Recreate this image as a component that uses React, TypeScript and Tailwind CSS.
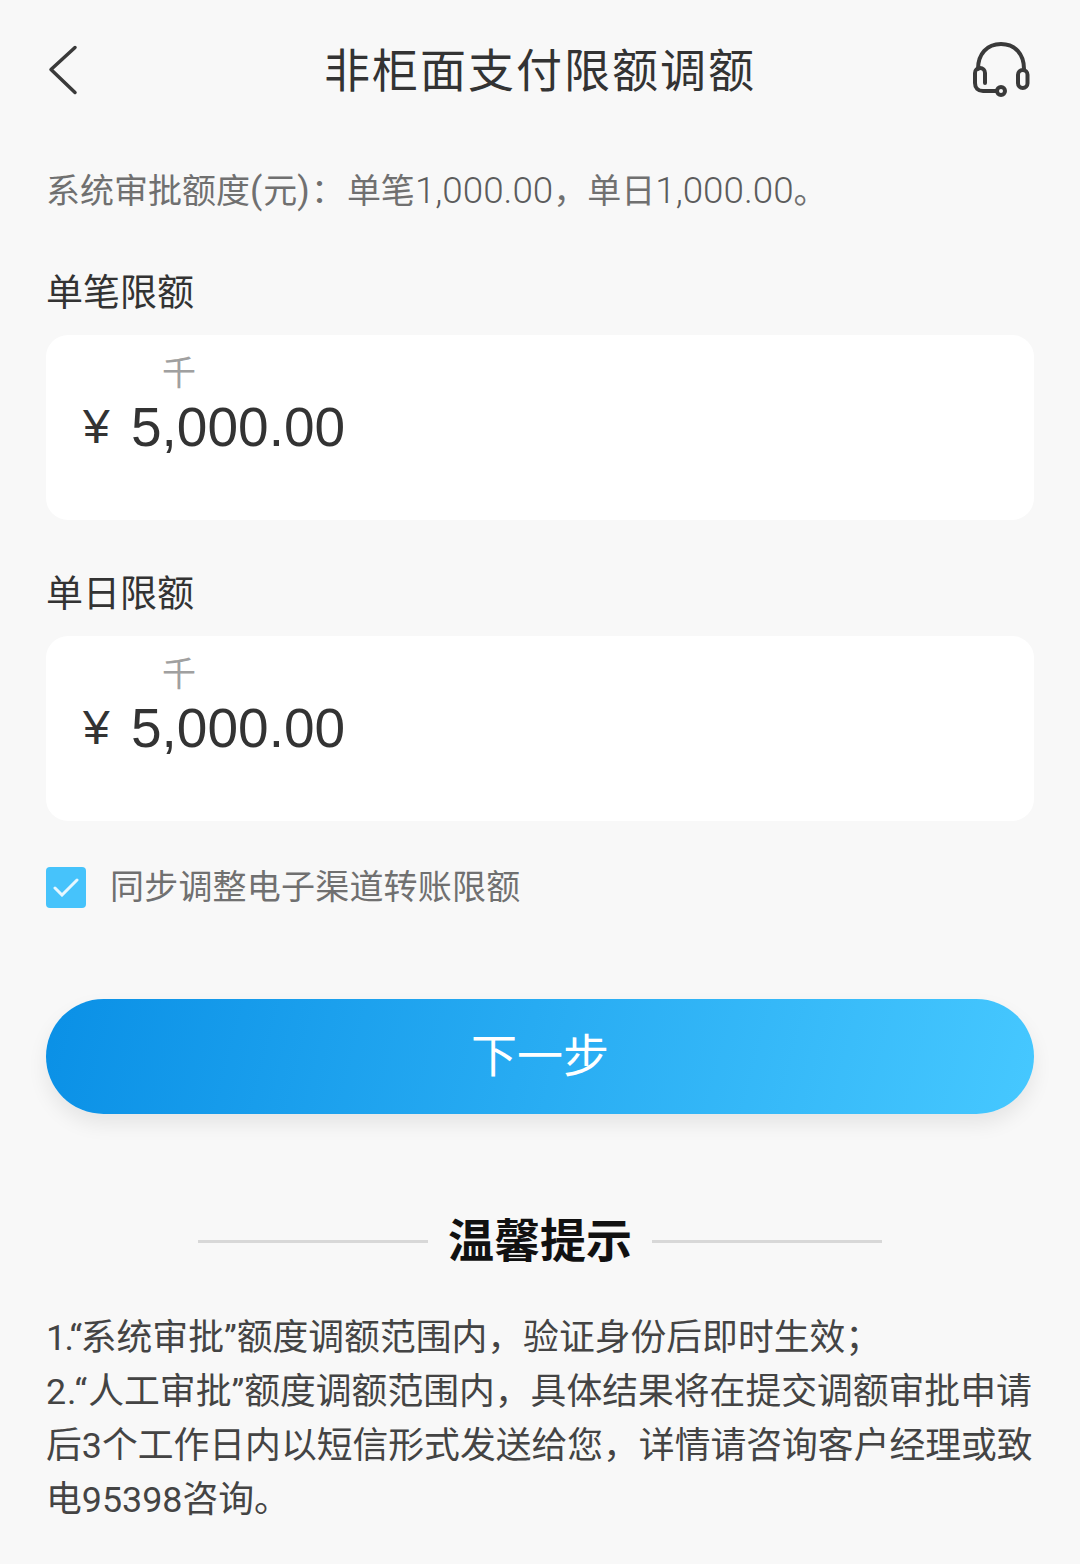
const FONT = "font-['Roboto','Noto_Sans_CJK_SC',sans-serif]";

function BackIcon() {
  return (
    <svg width="30" height="50" viewBox="0 0 30 50" fill="none" stroke="#3a3a3a" strokeWidth="3.500" strokeLinecap="round" strokeLinejoin="round" aria-hidden="true">
      <path d="M27 2.500 3 24.500l24 23" />
    </svg>
  );
}

function HeadsetIcon() {
  return (
    <svg width="62" height="60" viewBox="0 0 62 60" fill="none" stroke="#3a3a3a" strokeWidth="4" strokeLinecap="round" strokeLinejoin="round" aria-hidden="true">
      <path d="M8 29C8 14 17 4 31 4s23 10 23 25" />
      <path d="M15 43V33a5 5 0 0 0-10 0v10c0 5 3 8 8 8h14" />
      <rect x="48" y="30" width="9.500" height="18" rx="4.750" />
      <circle cx="31" cy="51" r="4" />
    </svg>
  );
}

function AmountCard({ label }: { label: string }) {
  return (
    <section>
      <h2 className="text-[37px] leading-[44px] text-[#333333] font-normal">{label}</h2>
      <div className="mt-[19px] h-[185px] rounded-[22px] bg-white pl-[37px] pt-[15px]">
        <div className="pl-[79px] text-[34px] leading-[46px] text-[#a0a0a0] font-normal">千</div>
        <div className="-mt-px flex items-center text-[55px] leading-[64px] text-[#333333] font-['Liberation_Sans',sans-serif]">
          <span className="w-[48px] text-[48px]">¥</span>
          <span>5,000.00</span>
        </div>
      </div>
    </section>
  );
}

export default function App() {
  return (
    <div className={`${FONT} w-[1080px] h-[1564px] overflow-hidden bg-[#f8f8f8] px-[46px]`}>
      <header className="relative flex h-[142px] items-center justify-center">
        <div className="absolute left-[2px] top-[45px]">
          <BackIcon />
        </div>
        <h1 className="text-[46px] font-normal tracking-[2px] text-[#333333]">非柜面支付限额调额</h1>
        <div className="absolute right-[2px] top-[40px]">
          <HeadsetIcon />
        </div>
      </header>

      <p className="mt-[24px] text-[34px] leading-[50px] text-[#707070] whitespace-nowrap">
        系统审批额度<span className="text-[36px] tracking-[1px]">(</span>元<span className="text-[36px] tracking-[1px]">)</span><span className="tracking-[2px]">：</span>单笔<span className="text-[36.800px] font-light text-[#5c5c5c]">1,000.00</span>，单日<span className="text-[36.800px] font-light text-[#5c5c5c]">1,000.00</span>。
      </p>

      <div className="mt-[56px] flex flex-col gap-[53px]">
        <AmountCard label="单笔限额" />
        <AmountCard label="单日限额" />
      </div>

      <label className="mt-[44px] flex items-center gap-[24px]">
        <span className="flex h-[41px] w-[40px] items-center justify-center rounded-[4px] bg-[#46c3fb]">
          <svg width="26" height="19" viewBox="0 0 26 19" fill="none" stroke="#e6f7ff" strokeWidth="3" strokeLinecap="round" aria-hidden="true">
            <path d="M2 10l7 7L24 2" />
          </svg>
        </span>
        <span className="text-[34px] leading-[44px] tracking-[0.200px] text-[#707070]">同步调整电子渠道转账限额</span>
      </label>

      <button type="button" className="mt-[90px] h-[115px] w-full rounded-[58px] bg-[linear-gradient(105deg,#0a90e6,#46c8ff)] text-[46px] text-white shadow-[0_10px_20px_rgba(0,0,0,0.08)]">
        下一步
      </button>

      <div className="mt-[97px] flex items-center justify-center gap-[20px]">
        <span className="h-[3px] w-[230px] bg-[#d8d8d8]" />
        <h3 className="text-[46px] leading-[60px] font-bold text-[#111111]">温馨提示</h3>
        <span className="h-[3px] w-[230px] bg-[#d8d8d8]" />
      </div>

      <div className="mt-[40px] text-[35.800px] leading-[54px] text-[#444444] whitespace-nowrap">
        <p><span className="tracking-[-1.500px]">1.“</span>系统审批”额度调额范围内，验证身份后即时生效；</p>
        <p><span className="tracking-[1px]">2.“</span>人工审批”额度调额范围内，具体结果将在提交调额审批申请</p>
        <p>后3个工作日内以短信形式发送给您，详情请咨询客户经理或致</p>
        <p>电95398咨询。</p>
      </div>
    </div>
  );
}
